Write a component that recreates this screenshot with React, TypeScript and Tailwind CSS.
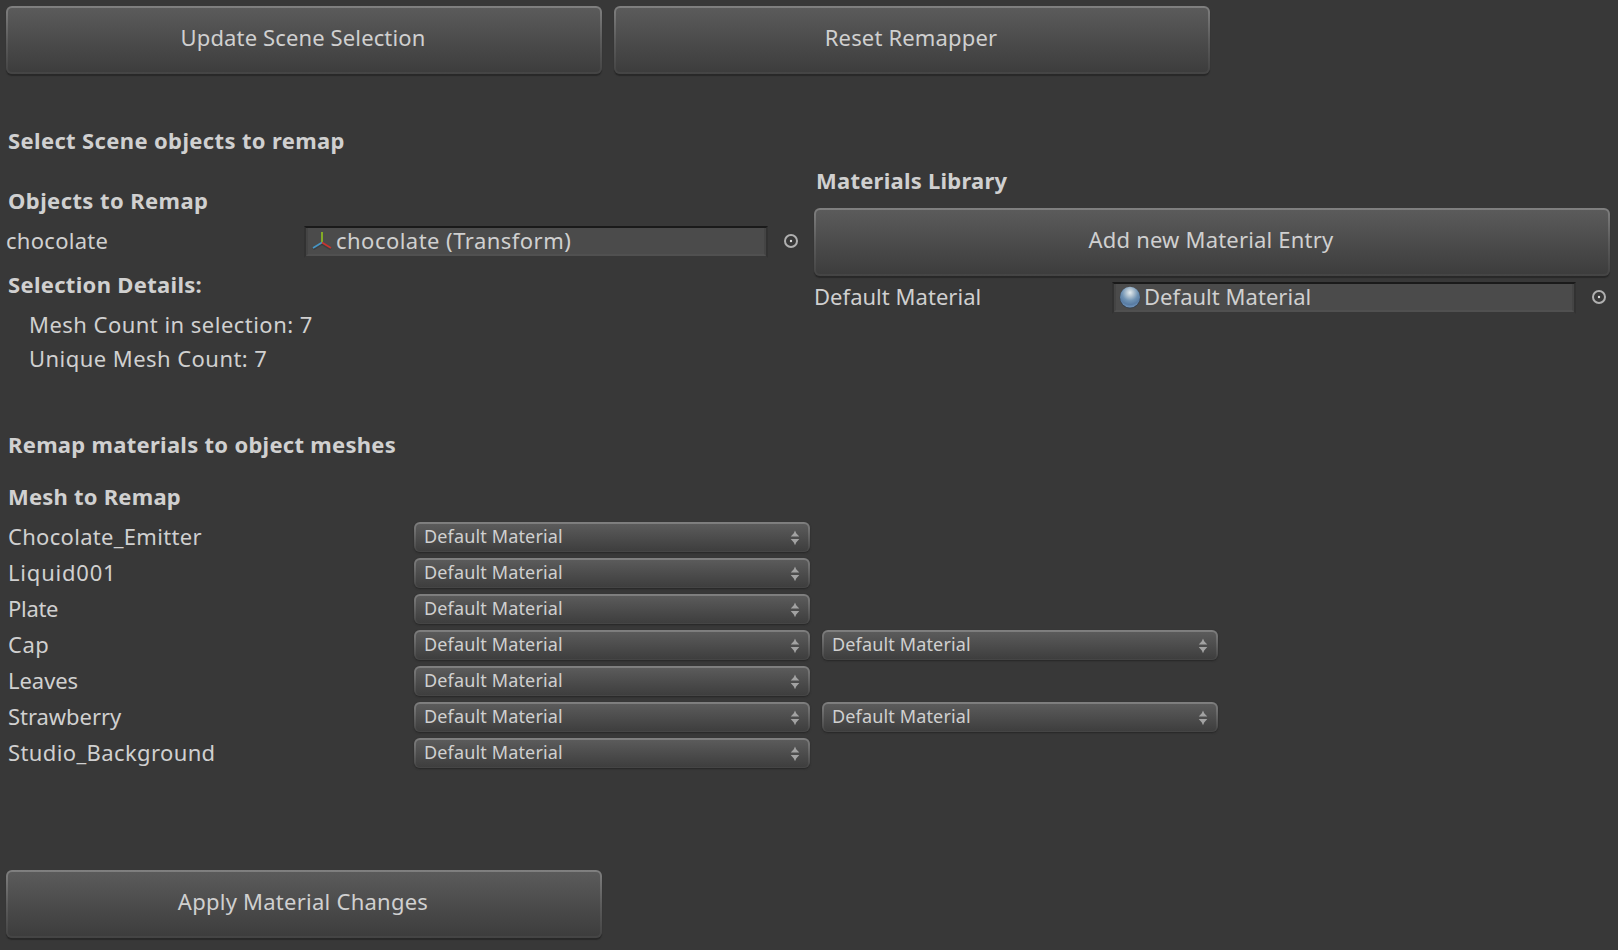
import React from "react";

type ActionButtonProps = {
  label: string;
  className: string;
};

function ActionButton({ label, className }: ActionButtonProps) {
  return (
    <button
      type="button"
      className={`h-[68px] shrink-0 rounded-[6px] bg-linear-to-b from-[#808080] via-[#5c5c5c] to-[#444444] p-[2px] shadow-[0_2px_1px_#282828] ${className}`}
    >
      <span className="flex h-full w-full justify-center rounded-[4px] bg-linear-to-b from-[#5b5b5b] to-[#3d3d3d] pt-[13px] pr-[2px] leading-[32px]">
        {label}
      </span>
    </button>
  );
}

function PopupArrows() {
  return (
    <svg width="10" height="16" viewBox="0 0 10 16" className="shrink-0">
      <path d="M5 0.5 6.2 3.2 9.3 6.6H0.7L3.8 3.2Z" fill="#a2a2a2" />
      <path d="M0.7 9H9.3L6.2 12.6 5 15.3 3.8 12.6Z" fill="#a2a2a2" />
    </svg>
  );
}

function Popup({ label }: { label: string }) {
  return (
    <button
      type="button"
      className="h-[30px] w-[396px] shrink-0 rounded-[6px] bg-linear-to-b from-[#808080] via-[#626262] to-[#444444] p-[2px] pb-[1px] shadow-[0_1px_2px_#262626]"
    >
      <span className="flex h-full w-full items-center justify-between rounded-[4px] bg-linear-to-b from-[#5b5b5b] to-[#3e3e3e] pr-[8px] pl-[8px] text-[18px] leading-[27px] tracking-[0.15px]">
        <span className="-mt-[3px]">{label}</span>
        <PopupArrows />
      </span>
    </button>
  );
}

function TransformIcon() {
  return (
    <svg width="20" height="18" viewBox="0 0 20 18" className="mt-[4px] shrink-0">
      <path d="M10 11.5 1 17" stroke="#262a2c" strokeWidth="3" opacity="0.35" />
      <path d="M10 11.5 19 17" stroke="#262a2c" strokeWidth="3" opacity="0.35" />
      <path d="M10 11V0" stroke="#83ab26" strokeWidth="2" />
      <path d="M10 10.5 1 16" stroke="#4795c4" strokeWidth="1.8" />
      <path d="M10 10.5 19 16" stroke="#c8352f" strokeWidth="1.8" />
    </svg>
  );
}

function MaterialIcon() {
  return (
    <svg width="22" height="23" viewBox="0 0 22 23" className="mt-[2px] shrink-0">
      <defs>
        <radialGradient id="sphere" cx="0.5" cy="0.28" r="0.72">
          <stop offset="0" stopColor="#e3ebef" />
          <stop offset="0.2" stopColor="#bccbd6" />
          <stop offset="0.55" stopColor="#6f92b3" />
          <stop offset="0.8" stopColor="#587ba2" />
          <stop offset="1" stopColor="#7397bf" />
        </radialGradient>
      </defs>
      <ellipse cx="11" cy="11.7" rx="10.4" ry="10.8" fill="#35414e" />
      <ellipse cx="11" cy="11.2" rx="10" ry="10.4" fill="url(#sphere)" />
    </svg>
  );
}

function PickerIcon() {
  return (
    <svg width="14" height="14" viewBox="0 0 14 14" className="mt-[8px] shrink-0">
      <circle cx="7" cy="7" r="6" fill="none" stroke="#b0b0b0" strokeWidth="2" />
      <circle cx="7" cy="7" r="1.2" fill="#dcdcdc" />
    </svg>
  );
}

type ObjectFieldProps = {
  icon: React.ReactNode;
  children: React.ReactNode;
};

function ObjectField({ icon, children }: ObjectFieldProps) {
  return (
    <div className="flex h-[32px] shrink-0">
      <div className="mr-[16px] flex h-[32px] w-[464px] border-2 border-x-[#323232] border-t-[#1a1a1a] border-b-[#383838]">
        <div className="flex w-full border-x-2 border-b-2 border-x-[#444444] border-b-[#505050] bg-[#4b4b4b]">
          {icon}
          {children}
        </div>
      </div>
      <PickerIcon />
    </div>
  );
}

type MeshRow = {
  name: string;
  tracking: string;
  slots: number;
};

const meshes: MeshRow[] = [
  { name: "Chocolate_Emitter", tracking: "tracking-[0.3px]", slots: 1 },
  { name: "Liquid001", tracking: "tracking-[0.8px]", slots: 1 },
  { name: "Plate", tracking: "tracking-[-0.3px]", slots: 1 },
  { name: "Cap", tracking: "tracking-[0.5px]", slots: 2 },
  { name: "Leaves", tracking: "tracking-[-0.05px]", slots: 1 },
  { name: "Strawberry", tracking: "tracking-[-0.05px]", slots: 2 },
  { name: "Studio_Background", tracking: "tracking-[0.38px]", slots: 1 },
];

export default function App() {
  return (
    <main className="flex h-[950px] w-[1618px] flex-col overflow-hidden bg-[#383838] pt-[6px] pl-[6px] font-['Noto_Sans',sans-serif] text-[22px] leading-[32px] whitespace-nowrap text-[#d0d0d0]">
      <div className="flex gap-[12px]">
        <ActionButton label="Update Scene Selection" className="w-[596px] tracking-[0.13px]" />
        <ActionButton label="Reset Remapper" className="w-[596px] tracking-[0.16px]" />
      </div>

      <h1 className="mt-[50px] pl-[2px] font-bold tracking-[0.36px]">Select Scene objects to remap</h1>

      <div className="mt-[8px] flex h-[219px]">
        <section className="w-[808px] pt-[20px]">
          <h2 className="pl-[2px] font-bold tracking-[0.41px]">Objects to Remap</h2>
          <div className="mt-[10px] flex">
            <span className="w-[298px] leading-[28px] tracking-[0.28px]">chocolate</span>
            <ObjectField icon={<span className="mr-[4px] ml-[4px]"><TransformIcon /></span>}>
              <span className="leading-[24px] tracking-[0.47px]">chocolate (Transform)</span>
            </ObjectField>
          </div>
          <h2 className="mt-[10px] pl-[2px] font-bold tracking-[0.31px]">Selection Details:</h2>
          <p className="mt-[8px] pl-[23px] tracking-[0.47px]">Mesh Count in selection: 7</p>
          <p className="mt-[2px] pl-[23px] tracking-[0.45px]">Unique Mesh Count: 7</p>
        </section>

        <section className="w-[796px]">
          <h2 className="pl-[2px] font-bold tracking-[0.24px]">Materials Library</h2>
          <ActionButton label="Add new Material Entry" className="mt-[12px] w-[796px] tracking-[0.19px]" />
          <div className="mt-[6px] flex">
            <span className="w-[298px] leading-[28px] tracking-[0.03px]">Default Material</span>
            <ObjectField icon={<span className="mr-[3px] ml-[3px]"><MaterialIcon /></span>}>
              <span className="leading-[24px] tracking-[0.03px]">Default Material</span>
            </ObjectField>
          </div>
        </section>
      </div>

      <h1 className="mt-[45px] pl-[2px] font-bold tracking-[0.28px]">Remap materials to object meshes</h1>
      <h2 className="mt-[20px] pl-[2px] font-bold tracking-[0.22px]">Mesh to Remap</h2>

      <div className="mt-[10px] flex flex-col gap-[6px]">
        {meshes.map((mesh) => (
          <div key={mesh.name} className="flex h-[30px]">
            <span className={`w-[408px] pl-[2px] leading-[28px] ${mesh.tracking}`}>{mesh.name}</span>
            <div className="flex gap-[12px]">
              {Array.from({ length: mesh.slots }, (_, slot) => (
                <Popup key={slot} label="Default Material" />
              ))}
            </div>
          </div>
        ))}
      </div>

      <ActionButton label="Apply Material Changes" className="mt-[102px] w-[596px] tracking-[0.25px]" />
    </main>
  );
}
